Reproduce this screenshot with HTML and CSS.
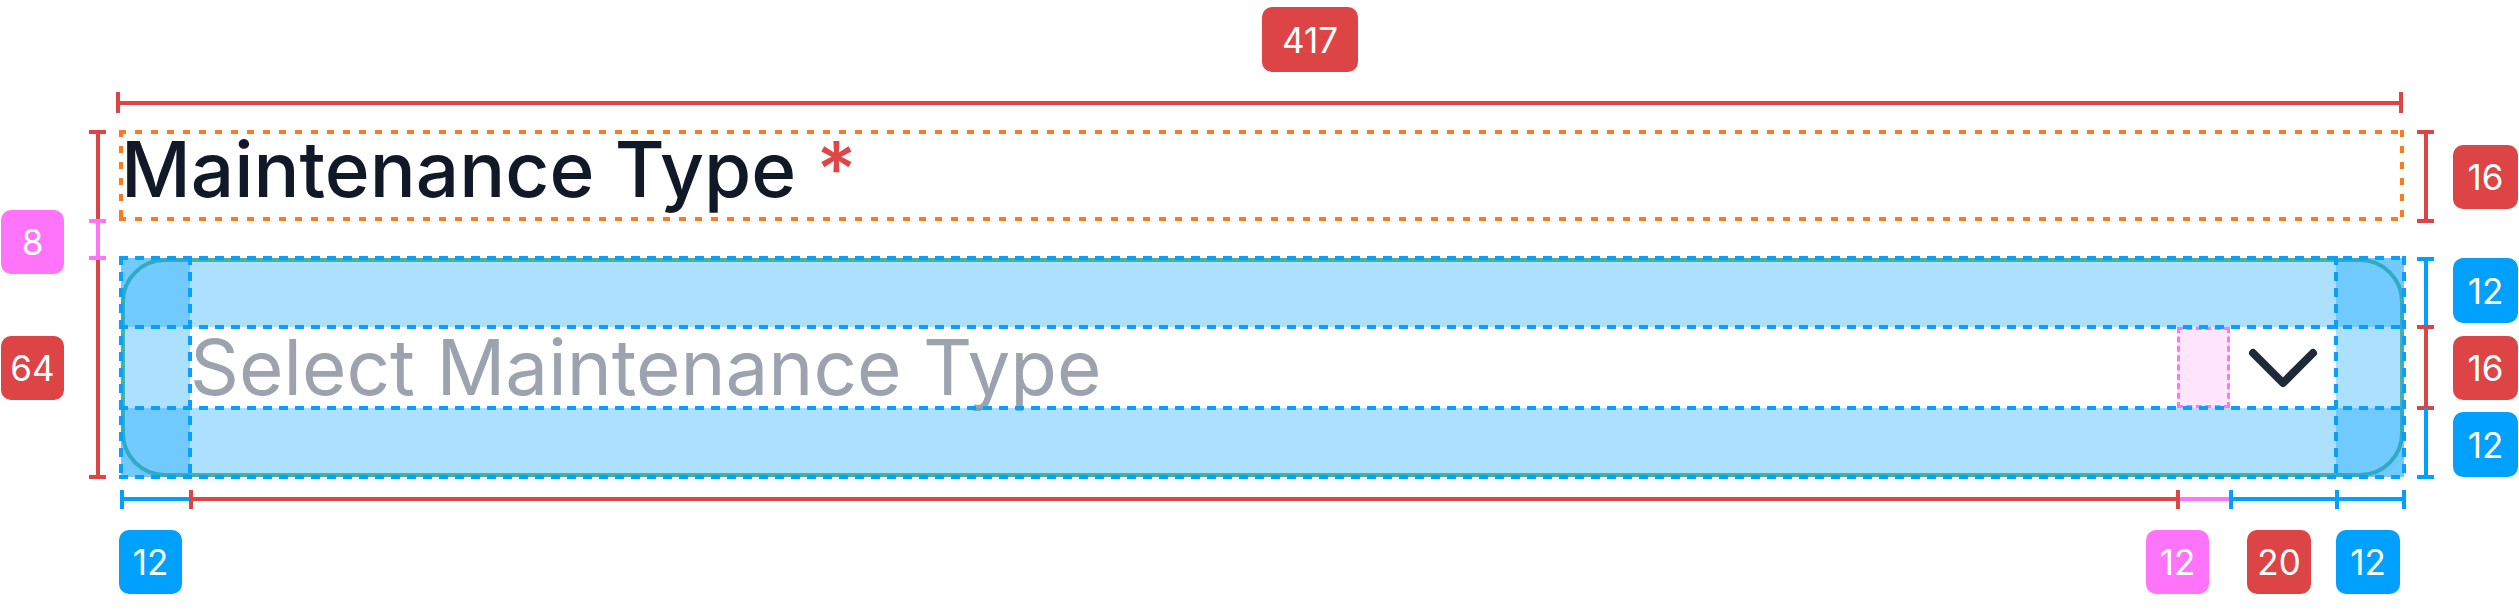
FILE: index.html
```html
<!DOCTYPE html>
<html lang="en">
  <head>
    <meta charset="UTF-8" />
    <meta name="viewport" content="width=device-width, initial-scale=1.0" />
    <title>Select field spec</title>
    <link rel="stylesheet" href="styles.css">
  </head>
  <body>
    <div class="page">
      <div class="field">
        <label class="field-label">Maintenance Type <span class="req">*</span></label>
        <div class="select">
          <span class="placeholder">Select Maintenance Type</span>
          <span class="gap"></span>
          <span class="chevron">
            <svg viewBox="0 0 24 24" fill="none" stroke="currentColor" stroke-width="2" stroke-linecap="round" stroke-linejoin="round">
              <path d="M19.5 8.25l-7.5 7.5-7.5-7.5" />
            </svg>
          </span>
          <!-- padding overlay -->
          <div class="pad pad-rows"></div>
          <div class="pad pad-cols"></div>
          <div class="guide guide-box"></div>
          <div class="guide guide-rows"></div>
          <div class="guide guide-cols"></div>
        </div>
      </div>

      <!-- width -->
      <div class="line red top-line"></div>
      <div class="tick red top-tick-l"></div>
      <div class="tick red top-tick-r"></div>
      <div class="tag red tag-417">417</div>

      <!-- left measure -->
      <div class="line red left-line"></div>
      <div class="cap red left-cap-t"></div>
      <div class="cap red left-cap-b"></div>
      <div class="line pink left-gap"></div>
      <div class="cap pink left-gap-t"></div>
      <div class="cap pink left-gap-b"></div>
      <div class="tag pink tag-8">8</div>
      <div class="tag red tag-64">64</div>

      <!-- right measure -->
      <div class="line red r-label"></div>
      <div class="cap red r-cap-1"></div>
      <div class="cap red r-cap-2"></div>
      <div class="line blue r-pt"></div>
      <div class="cap blue r-cap-3"></div>
      <div class="line red r-mid"></div>
      <div class="cap red r-cap-4"></div>
      <div class="cap red r-cap-5"></div>
      <div class="line blue r-pb"></div>
      <div class="cap blue r-cap-6"></div>
      <div class="tag red tag-r16a">16</div>
      <div class="tag blue tag-r12a">12</div>
      <div class="tag red tag-r16b">16</div>
      <div class="tag blue tag-r12b">12</div>

      <!-- bottom measure -->
      <div class="line blue b-pl"></div>
      <div class="line red b-text"></div>
      <div class="line pink b-gap"></div>
      <div class="line blue b-icon"></div>
      <div class="tick blue b-t1"></div>
      <div class="tick red b-t2"></div>
      <div class="tick red b-t3"></div>
      <div class="tick blue b-t4"></div>
      <div class="tick blue b-t5"></div>
      <div class="tick blue b-t6"></div>
      <div class="tag blue tag-b12a">12</div>
      <div class="tag pink tag-b12b">12</div>
      <div class="tag red tag-b20">20</div>
      <div class="tag blue tag-b12c">12</div>
    </div>
  </body>
</html>
```

FILE: styles.css
```css
body {
  margin: 0;
  background-color: #fff;
  font-family: Inter, "Noto Sans", sans-serif;
}

.page {
  position: relative;
  height: 615px;
  padding: 132px 0 0 121px;
  box-sizing: border-box;
}

.field {
  width: 2283px;
}

.field-label {
  position: relative;
  display: block;
  height: 89px;
  font-size: 76.5px;
  line-height: 74px;
  font-weight: 500;
  color: #111827;
}

/* dashed box drawn with gradients so dash and gap can be set */
.field-label::after {
  content: "";
  position: absolute;
  inset: -2px 0 0 -2px;
  --dash-h: repeating-linear-gradient(90deg, #ff7a1f 0 7px, transparent 7px 16px);
  --dash-v: repeating-linear-gradient(180deg, #ff7a1f 0 7px, transparent 7px 16px);
  background:
    var(--dash-h) top left / 100% 4px no-repeat,
    var(--dash-h) bottom left / 100% 4px no-repeat,
    var(--dash-v) top left / 4px 100% no-repeat,
    var(--dash-v) top right / 4px 100% no-repeat;
}

.req {
  color: #e04548;
}

.select {
  position: relative;
  display: flex;
  align-items: center;
  height: 219px;
  margin-top: 37px;
  padding: 65px 64px 65px 65px;
  box-sizing: border-box;
  border: 4px solid #6bb87e;
  border-radius: 44px;
  background-color: #fff;
  box-shadow: 0 4px 8px rgba(0, 0, 0, 0.05);
}

.placeholder {
  flex: 1;
  font-size: 76.3px;
  line-height: 81px;
  color: #9ca3af;
  white-space: nowrap;
}

.gap {
  align-self: stretch;
  width: 53px;
  box-sizing: border-box;
  background-color: #ffe6fd;
  border: 3px dashed #ff74f9;
}

.chevron {
  display: flex;
  justify-content: center;
  width: 106px;
  color: #1f2937;
}

.chevron svg {
  width: 96px;
  height: 96px;
}

/* padding overlay */
.pad {
  position: absolute;
  inset: -4px;
  box-sizing: border-box;
}

.pad-rows {
  border-top: 69px solid rgba(0, 160, 254, 0.33);
  border-bottom: 69px solid rgba(0, 160, 254, 0.33);
}

.pad-cols {
  border-left: 69px solid rgba(0, 160, 254, 0.33);
  border-right: 68px solid rgba(0, 160, 254, 0.33);
}

.guide {
  position: absolute;
  --dash-h: repeating-linear-gradient(90deg, #0a9ffd 0 9px, transparent 9px 16px);
  --dash-v: repeating-linear-gradient(180deg, #0a9ffd 0 9px, transparent 9px 16px);
}

.guide-box {
  inset: -6px;
  background:
    var(--dash-h) top left / 100% 4px no-repeat,
    var(--dash-h) bottom left / 100% 4px no-repeat,
    var(--dash-v) top left / 4px 100% no-repeat,
    var(--dash-v) top right / 4px 100% no-repeat;
}

.guide-rows {
  top: 63px;
  bottom: 63px;
  left: -6px;
  right: -6px;
  background:
    var(--dash-h) top left / 100% 4px no-repeat,
    var(--dash-h) bottom left / 100% 4px no-repeat;
}

.guide-cols {
  left: 63px;
  right: 62px;
  top: -6px;
  bottom: -6px;
  background:
    var(--dash-v) top left / 4px 100% no-repeat,
    var(--dash-v) top right / 4px 100% no-repeat;
}

/* measure marks */
.line,
.tick,
.cap,
.tag {
  position: absolute;
}

.red { background-color: #dd4446; }
.blue { background-color: #00a0fe; }
.pink { background-color: #ff74f9; }

.tick {
  width: 4px;
}

.cap {
  height: 4px;
}

.tag {
  display: flex;
  align-items: center;
  justify-content: center;
  height: 64px;
  width: 63px;
  border-radius: 10px;
  color: #fff;
  font-size: 35px;
}

.top-line { left: 118px; top: 101px; width: 2284px; height: 4px; }
.top-tick-l { left: 116px; top: 92px; height: 21px; }
.top-tick-r { left: 2399px; top: 92px; height: 21px; }
.tag-417 { left: 1262px; top: 7px; width: 96px; height: 65px; }

.left-line { left: 96px; top: 132px; width: 4px; height: 345px; }
.left-cap-t { left: 89px; top: 130px; width: 17px; }
.left-cap-b { left: 89px; top: 475px; width: 17px; }
.left-gap { left: 96px; top: 221px; width: 4px; height: 37px; }
.left-gap-t { left: 89px; top: 219px; width: 17px; }
.left-gap-b { left: 89px; top: 256px; width: 17px; }
.tag-8 { left: 1px; top: 210px; }
.tag-64 { left: 1px; top: 336px; }

.r-label { left: 2424px; top: 132px; width: 4px; height: 89px; }
.r-cap-1 { left: 2417px; top: 130px; width: 17px; }
.r-cap-2 { left: 2417px; top: 219px; width: 17px; }
.r-pt { left: 2424px; top: 258px; width: 4px; height: 69px; }
.r-cap-3 { left: 2417px; top: 257px; width: 17px; }
.r-mid { left: 2424px; top: 327px; width: 4px; height: 81px; }
.r-cap-4 { left: 2417px; top: 325px; width: 17px; }
.r-cap-5 { left: 2417px; top: 406px; width: 17px; }
.r-pb { left: 2424px; top: 408px; width: 4px; height: 69px; }
.r-cap-6 { left: 2417px; top: 475px; width: 17px; }
.tag-r16a { left: 2453px; top: 145px; width: 65px; }
.tag-r12a { left: 2453px; top: 258px; width: 65px; height: 65px; }
.tag-r16b { left: 2453px; top: 336px; width: 65px; }
.tag-r12b { left: 2453px; top: 412px; width: 65px; height: 65px; }

.b-pl { left: 121px; top: 497px; width: 69px; height: 4px; }
.b-text { left: 190px; top: 497px; width: 1987px; height: 4px; }
.b-gap { left: 2177px; top: 497px; width: 53px; height: 4px; }
.b-icon { left: 2230px; top: 497px; width: 174px; height: 4px; }
.b-t1 { left: 120px; top: 490px; height: 19px; }
.b-t2 { left: 189px; top: 490px; height: 19px; }
.b-t3 { left: 2176px; top: 490px; height: 19px; }
.b-t4 { left: 2229px; top: 490px; height: 19px; }
.b-t5 { left: 2335px; top: 490px; height: 19px; }
.b-t6 { left: 2402px; top: 490px; height: 19px; }
.tag-b12a { left: 119px; top: 530px; }
.tag-b12b { left: 2146px; top: 530px; }
.tag-b20 { left: 2247px; top: 530px; width: 64px; }
.tag-b12c { left: 2336px; top: 530px; width: 64px; }
```
